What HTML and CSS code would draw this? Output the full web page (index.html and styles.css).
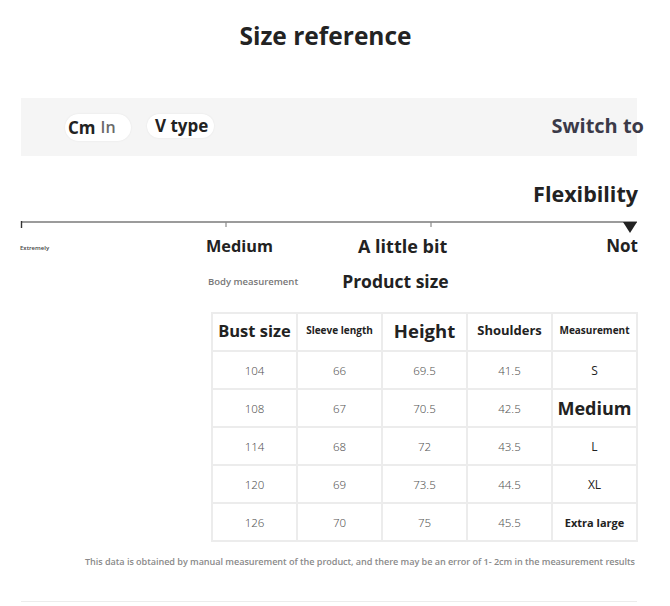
FILE: index.html
```html
<!DOCTYPE html>
<html lang="en">
<head>
<meta charset="utf-8">
<title>Size reference</title>
<link rel="stylesheet" href="styles.css">
</head>
<body>
<div class="page">
  <h1 class="title">Size reference</h1>

  <div class="band">
    <div class="pill pill-unit"><span class="on">Cm</span><span class="off">In</span></div>
    <div class="pill pill-type">V type</div>
    <div class="switch">Switch to</div>
  </div>

  <div class="flex-title">Flexibility</div>

  <svg class="scale" width="620" height="18" viewBox="0 0 620 18">
    <line x1="1" y1="6" x2="617" y2="6" stroke="#7a7a7a" stroke-width="1.6"/>
    <line x1="1.5" y1="5" x2="1.5" y2="12" stroke="#333" stroke-width="1.4"/>
    <line x1="206" y1="6" x2="206" y2="11" stroke="#8a8a8a" stroke-width="1.2"/>
    <line x1="411" y1="6" x2="411" y2="11" stroke="#8a8a8a" stroke-width="1.2"/>
    <polygon points="603,6 617,6 610,17" fill="#222"/>
  </svg>

  <div class="levels">
    <span class="lv-ext">Extremely</span>
    <span class="lv lv-med">Medium</span>
    <span class="lv lv-bit">A little bit</span>
    <span class="lv lv-not">Not</span>
  </div>

  <div class="tabs">
    <span class="tab-body">Body measurement</span>
    <span class="tab-prod">Product size</span>
  </div>

  <table class="sizes">
    <thead>
      <tr>
        <th class="h-bust">Bust size</th>
        <th class="h-sm">Sleeve length</th>
        <th class="h-height">Height</th>
        <th class="h-sh">Shoulders</th>
        <th class="h-sm">Measurement</th>
      </tr>
    </thead>
    <tbody>
      <tr><td>104</td><td>66</td><td>69.5</td><td>41.5</td><td class="sz">S</td></tr>
      <tr><td>108</td><td>67</td><td>70.5</td><td>42.5</td><td class="sz sz-big">Medium</td></tr>
      <tr><td>114</td><td>68</td><td>72</td><td>43.5</td><td class="sz">L</td></tr>
      <tr><td>120</td><td>69</td><td>73.5</td><td>44.5</td><td class="sz">XL</td></tr>
      <tr><td>126</td><td>70</td><td>75</td><td>45.5</td><td class="sz sz-xl">Extra large</td></tr>
    </tbody>
  </table>

  <p class="note">This data is obtained by manual measurement of the product, and there may be an error of 1- 2cm in the measurement results</p>

  <div class="rule"></div>
</div>
</body>
</html>
```

FILE: styles.css
```css
* { box-sizing: border-box; }

html, body {
  margin: 0;
  padding: 0;
  background: #ffffff;
}

body {
  font-family: "Open Sans", "Noto Sans", "Liberation Sans", sans-serif;
  color: #222;
}

.page {
  width: 670px;
  height: 606px;
  overflow: hidden;
}

.title {
  margin: 0;
  padding: 20px 19px 0 0;
  font-size: 24.5px;
  line-height: 32px;
  font-weight: 700;
  text-align: center;
  color: #232323;
}

.band {
  margin: 46px 33px 0 21px;
  height: 58px;
  background: #f5f5f5;
  display: flex;
  align-items: center;
  padding-left: 44px;
}

.pill {
  height: 27px;
  border-radius: 14px;
  background: #fff;
  box-shadow: 0 0 2px rgba(0,0,0,0.08);
  display: flex;
  align-items: center;
  font-weight: 700;
  font-size: 17px;
  color: #222;
}

.pill-unit {
  width: 66px;
  padding-left: 3px;
  gap: 5px;
}

.pill-unit .on { color: #222; }
.pill-unit .off { color: #6a6a6a; font-weight: 600; font-size: 16px; }

.pill-type {
  margin-left: 16px;
  padding: 0 6px 0 8px;
  height: 24px;
  margin-top: -3px;
}

.switch {
  margin-left: auto;
  margin-right: -7px;
  font-size: 20px;
  font-weight: 700;
  color: #3b3a48;
  margin-top: -4px;
}

.flex-title {
  margin-top: 26px;
  margin-right: 32px;
  text-align: right;
  font-size: 21.5px;
  line-height: 24px;
  font-weight: 700;
  color: #222;
}

.scale {
  display: block;
  margin: 10px 0 0 20px;
}

.levels {
  display: grid;
  grid-template-columns: 186px 152px 1fr auto;
  align-items: center;
  margin: 0 32px 0 20px;
  height: 24px;
}

.lv-ext {
  font-size: 6px;
  font-weight: 600;
  color: #444;
  padding-top: 4px;
}

.lv {
  font-size: 17px;
  font-weight: 700;
  color: #222;
  line-height: 24px;
}

.lv-med { font-size: 16.3px; }
.lv-bit { font-size: 18px; }

.lv-not { text-align: right; }

.tabs {
  display: flex;
  align-items: center;
  margin-top: 11px;
  padding-left: 208px;
  height: 24px;
}

.tab-body {
  font-size: 9.5px;
  font-weight: 600;
  color: #777;
}

.tab-prod {
  margin-left: 44px;
  font-size: 17.5px;
  font-weight: 700;
  color: #222;
}

.sizes {
  margin: 19px 0 0 211px;
  border-collapse: collapse;
  table-layout: fixed;
  width: 427px;
}

.sizes th,
.sizes td {
  border: 2px solid #ececec;
  width: 85px;
  height: 38px;
  padding: 0;
  text-align: center;
  vertical-align: middle;
}

.sizes th {
  color: #222;
  font-weight: 700;
  padding-bottom: 4px;
}

.h-bust { font-size: 16.5px; }
.h-height { font-size: 18.5px; font-weight: 600; }
.h-sh { font-size: 13px; font-weight: 600; }
.h-sm { font-size: 10px; font-weight: 600; }

.sizes td {
  font-family: "Noto Sans", "Open Sans", sans-serif;
  font-size: 11.5px;
  font-weight: 300;
  color: #555;
}

.sizes td.sz {
  font-family: "Open Sans", sans-serif;
  font-weight: 400;
  color: #222;
  font-size: 12px;
}

.sizes td.sz-big {
  font-size: 18px;
  font-weight: 700;
}

.sizes td.sz-xl {
  font-size: 11px;
  font-weight: 700;
}

.note {
  margin: 13px 35px 0 0;
  text-align: right;
  font-size: 9.1px;
  line-height: 14px;
  font-weight: 600;
  color: #8a8a8a;
  letter-spacing: -0.05px;
}

.rule {
  margin: 32px 33px 0 21px;
  height: 1px;
  background: #ececec;
}
```
